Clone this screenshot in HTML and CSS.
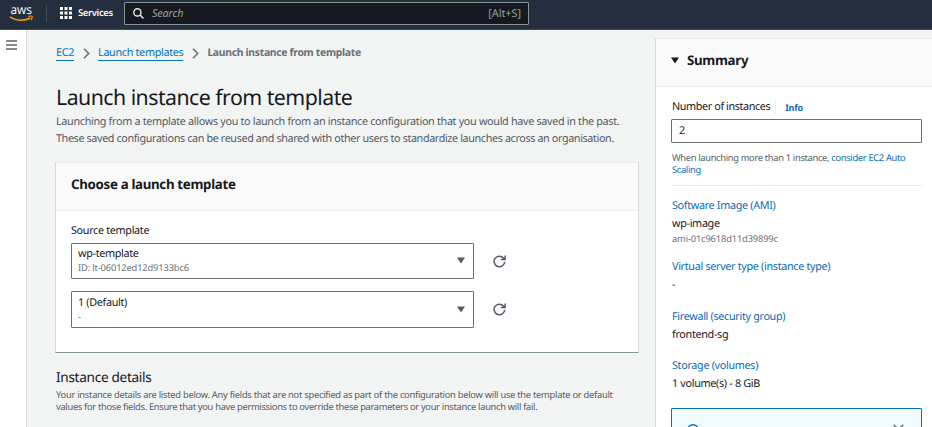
FILE: index.html
```html
<!DOCTYPE html>
<html lang="en">
<head>
<meta charset="utf-8">
<title>Launch instance from template</title>
<link rel="stylesheet" href="styles.css">
</head>
<body>
<header class="topbar">
  <svg class="logo" width="26" height="22" viewBox="0 0 26 22" role="img" aria-label="aws">
    <text class="logo-text" x="1.500" y="12.300" textLength="21.500" lengthAdjust="spacingAndGlyphs">aws</text>
    <path d="M.8 14.800C7 18.900 15.500 19.200 21.300 16" fill="none" stroke="#f90" stroke-width="1.500"/>
    <path d="M19.300 14.500c2-.8 4.200-.7 4 .1-.1 1.100-.8 2.700-1.500 3.400" fill="none" stroke="#f90" stroke-width="1.100"/>
  </svg>
  <span class="separator"></span>
  <svg class="grid-icon" width="12" height="12" viewBox="0 0 12 12" fill="#fff">
    <path d="M0 0h3v3H0zM4.500 0h3v3h-3zM9 0h3v3H9zM0 4.500h3v3H0zM4.500 4.500h3v3h-3zM9 4.500h3v3H9zM0 9h3v3H0zM4.500 9h3v3h-3zM9 9h3v3H9z"/>
  </svg>
  <span class="services">Services</span>
  <div class="search">
    <svg width="11" height="11" viewBox="0 0 11 11" fill="none" stroke="#e8eaea" stroke-width="1.400"><circle cx="4.400" cy="4.400" r="3.600"/><path d="M7 7l3.500 3.500"/></svg>
    <span class="placeholder">Search</span>
    <span class="shortcut">[Alt+S]</span>
  </div>
</header>
<div class="page">
  <nav class="rail">
    <svg width="11" height="10" viewBox="0 0 11 10" fill="none" stroke="#59626c" stroke-width="1.400"><path d="M0 1h11M0 5h11M0 9h11"/></svg>
  </nav>
  <main class="main">
    <div class="crumbs">
      <a class="crumb">EC2</a>
      <svg class="chevron" width="7" height="11" viewBox="0 0 7 11"><path d="M1 .8l4.700 4.700L1 10.200"/></svg>
      <a class="crumb">Launch templates</a>
      <svg class="chevron" width="7" height="11" viewBox="0 0 7 11"><path d="M1 .8l4.700 4.700L1 10.200"/></svg>
      <span class="current">Launch instance from template</span>
    </div>
    <h1>Launch instance from template</h1>
    <p class="lead">Launching from a template allows you to launch from an instance configuration that you would have saved in the past.<br><span class="lead-end">These saved configurations can be reused and shared with other users to standardize launches across an organisation.</span></p>
    <section class="card">
      <h2 class="card-head">Choose a launch template</h2>
      <div class="card-body">
        <div class="label">Source template</div>
        <div class="row">
          <div class="select">
            <div><div class="value">wp-template</div><div class="meta">ID: lt-06012ed12d9133bc6</div></div>
            <svg class="caret" width="8" height="7" viewBox="0 0 8 7"><path d="M0 .5h8L4 6.500z"/></svg>
          </div>
          <svg class="refresh" width="13" height="13" viewBox="0 0 13 13"><path d="M11.700 6.800A5.300 5.300 0 1 1 10.500 3.100L11.500 4.400M12.100.4v4.100H7.800"/></svg>
        </div>
        <div class="row">
          <div class="select select-version">
            <div><div class="value">1 (Default)</div><div class="meta">-</div></div>
            <svg class="caret" width="8" height="7" viewBox="0 0 8 7"><path d="M0 .5h8L4 6.500z"/></svg>
          </div>
          <svg class="refresh" width="13" height="13" viewBox="0 0 13 13"><path d="M11.700 6.800A5.300 5.300 0 1 1 10.500 3.100L11.500 4.400M12.100.4v4.100H7.800"/></svg>
        </div>
      </div>
    </section>
    <h3>Instance details</h3>
    <p class="note">Your instance details are listed below. Any fields that are not specified as part of the configuration below will use the template or default<br><span class="note-end">values for those fields. Ensure that you have permissions to override these parameters or your instance launch will fail.</span></p>
  </main>
  <aside class="summary">
    <h2 class="summary-head"><svg width="8" height="7" viewBox="0 0 8 7"><path d="M0 .5h8L4 6.500z" fill="#16191f"/></svg>Summary</h2>
    <div class="summary-body">
      <div class="count-label"><span>Number of instances</span><a class="info">Info</a></div>
      <div class="input">2</div>
      <p class="hint">When launching more than 1 instance, <a>consider EC2 Auto<br>Scaling</a></p>
      <dl>
        <div class="item ami"><dt>Software Image (AMI)</dt><dd>wp-image</dd><dd class="meta">ami-01c9618d11d39899c</dd></div>
        <div class="item server"><dt>Virtual server type (instance type)</dt><dd>-</dd></div>
        <div class="item firewall"><dt>Firewall (security group)</dt><dd>frontend-sg</dd></div>
        <div class="item"><dt>Storage (volumes)</dt><dd>1 volume(s) - 8 GiB</dd></div>
      </dl>
      <div class="alert">
        <svg width="12" height="12" viewBox="0 0 12 12" fill="none" stroke="#0073bb" stroke-width="1.500"><circle cx="6" cy="6" r="5.200"/></svg>
        <svg width="11" height="11" viewBox="0 0 11 11" fill="none" stroke="#687078" stroke-width="1.500"><path d="M.7.7l9.600 9.600M10.300.7L.7 10.300"/></svg>
      </div>
    </div>
  </aside>
</div>
</body>
</html>
```
FILE: styles.css
```css
* { box-sizing: border-box; }
body {
  margin: 0;
  height: 427px;
  overflow: hidden;
  background: #f2f3f3;
  color: #16191f;
  font: 10.8px/16px "Noto Sans", "Open Sans", sans-serif;
  letter-spacing: -0.32px;
  text-rendering: geometricPrecision;
}
h1, h2, h3, p, dl, dd { margin: 0; }
svg { display: block; flex: none; }
a { color: #0a6cb5; }

.topbar {
  display: flex;
  align-items: center;
  height: 30px;
  padding: 0 0 3px 9px;
  background: #232f3e;
  border-bottom: 1px solid #414750;
}
.logo { margin-top: -1px; overflow: visible; }
.logo-text { fill: #fff; font: 500 12.500px "Open Sans", sans-serif; letter-spacing: 0; }
.separator { width: 1px; height: 17px; margin: 0 13px 0 11px; background: #414d5c; }
.services { width: 34px; margin-left: 6px; color: #fff; font-size: 9.400px; font-weight: 600; white-space: nowrap; }
.search {
  display: flex;
  align-items: center;
  width: 405px;
  height: 23px;
  margin-left: 12px;
  padding: 0 7px 0 8px;
  background: #16191f;
  border: 1px solid #879596;
  border-radius: 1px;
}
.placeholder { margin: 1px 0 0 8px; color: #95a5a6; font-style: italic; font-size: 10.800px; letter-spacing: -0.150px; }
.shortcut { margin: 1px 0 0 auto; color: #95a5a6; font-size: 10.800px; letter-spacing: 0; }

.page { display: flex; height: 397px; overflow: hidden; }
.rail { flex: none; width: 27px; padding: 10px 0 0 6px; background: #fff; border-right: 1px solid #d5dbdb; }
.main { flex: none; width: 612px; padding: 15px 0 0 28px; }

.crumbs { display: flex; align-items: center; height: 16px; padding-left: 1px; white-space: nowrap; }
.crumb { border-bottom: 1px solid #0073bb; line-height: 15px; color: #0073bb; }
.chevron { margin: 0 8px 0 9px; fill: none; stroke: #687078; stroke-width: 1.500; }
.current { color: #687078; font-size: 10.400px; font-weight: 700; letter-spacing: -0.310px; }
h1 { margin-top: 22px; padding-left: 1px; font-size: 21.300px; font-weight: 400; line-height: 30px; letter-spacing: -0.530px; }
.lead { padding-left: 1px; color: #545b64; line-height: 17px; white-space: nowrap; }
.lead-end { letter-spacing: -0.380px; }

.card {
  width: 584px;
  height: 191px;
  margin-top: 15px;
  background: #fff;
  border: 1px solid #d5dbdb;
  border-top-color: #eaeded;
  border-bottom-color: #879596;
}
.card-head {
  height: 48px;
  padding: 13px 15px;
  background: #fafafa;
  border-bottom: 1px solid #eaeded;
  font-size: 13.300px;
  font-weight: 700;
  line-height: 17px;
}
.card-body { padding: 12px 15px; }
.label { margin-bottom: 4px; }
.row { display: flex; align-items: center; gap: 19px; margin-bottom: 12px; }
.select {
  display: flex;
  justify-content: space-between;
  align-items: center;
  width: 403px;
  height: 36px;
  padding: 0 8px 2px 6px;
  border: 1px solid #687078;
  border-radius: 1px;
}
.select-version { height: 37px; }
.select .value { line-height: 15px; }
.meta { color: #687078; font-size: 9.300px; line-height: 13px; letter-spacing: -0.140px; }
.caret { margin-top: 1px; fill: #545b64; }
.refresh { fill: none; stroke: #545b64; stroke-width: 1.500; }
h3 { margin-top: 15px; padding-left: 1px; font-size: 13.600px; font-weight: 400; line-height: 18px; letter-spacing: -0.300px; }
.note { margin-top: 3px; padding-left: 1px; color: #545b64; font-size: 9.300px; line-height: 12px; letter-spacing: -0.250px; white-space: nowrap; }
.note-end { letter-spacing: -0.300px; }

.summary { flex: none; width: 290px; height: 500px; margin: 8px 0 0 16px; background: #fff; border: 1px solid #d5dbdb; border-top-color: #eaeded; }
.summary-head {
  display: flex;
  align-items: center;
  gap: 8px;
  height: 48px;
  padding: 0 15px 5px;
  background: #fafafa;
  border-bottom: 1px solid #eaeded;
  font-size: 13.300px;
  font-weight: 700;
}
.summary-body { width: 267px; padding: 12px 0 0 15px; }
.count-label { display: flex; align-items: center; padding-left: 1px; letter-spacing: -0.390px; }
.info { margin-left: 5px; padding-left: 9px; border-left: 1px solid #eaeded; font-size: 9px; font-weight: 700; line-height: 13px; letter-spacing: -0.250px; }
.input { width: 251px; height: 24px; margin-top: 4px; padding-left: 7px; border: 1px solid #687078; border-radius: 1px; line-height: 22px; }
.hint { width: 251px; height: 43px; padding: 9px 0 0 1px; border-bottom: 1px solid #eaeded; color: #545b64; font-size: 9.300px; line-height: 12px; letter-spacing: -0.310px; white-space: nowrap; }
.item { line-height: 18px; }
dl { padding: 11px 0 0 1px; }
.item .meta { line-height: 12px; }
dt { color: #0a6cb5; }
.ami { height: 61px; }
.server { height: 50px; }
.firewall { height: 49px; }
.alert {
  display: flex;
  justify-content: space-between;
  width: 251px;
  height: 60px;
  margin-top: 15px;
  padding: 15px 17px 0 15px;
  background: #f1faff;
  border: 1px solid #0073bb;
  border-radius: 1px;
}
```
